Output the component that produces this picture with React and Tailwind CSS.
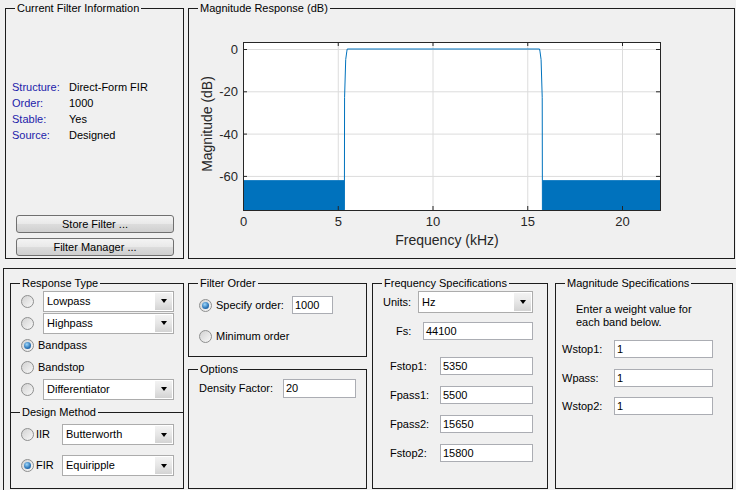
import React from 'react';

// Axes mapping for the magnitude plot (svg coords, panel interior)
const AX = { left: 54, right: 471, top: 33, bottom: 201 };
const fx = (f) => AX.left + f * 18.95;
const dy = (d) => 40 - d * 2.115;

const xTicks = [0, 5, 10, 15, 20];
const yTicks = [0, -20, -40, -60];

const response = [
  [5.35, -76.1], [5.36, -23], [5.42, -5], [5.48, -1], [5.5, 0],
  [15.65, 0], [15.67, -1], [15.73, -5], [15.79, -23], [15.8, -76.1],
];

function Panel({ title, className = '', children }) {
  return (
    <div className={`relative border border-[#1c1c1c] ${className}`}>
      <span className="absolute -top-[7px] left-[9px] bg-[#f0f0f0] px-[2px] leading-[13px] whitespace-nowrap">
        {title}
      </span>
      {children}
    </div>
  );
}

function Radio({ checked = false }) {
  return (
    <span className="flex h-[13px] w-[13px] shrink-0 items-center justify-center rounded-full border border-[#8e8f8f] bg-[linear-gradient(135deg,#d2d2d2,#f8f8f8)]">
      {checked && (
        <span className="h-[7px] w-[7px] rounded-full bg-[radial-gradient(circle_at_40%_35%,#9fd8fb,#2a73b6_60%,#174a80)]" />
      )}
    </span>
  );
}

function Select({ value, className = '' }) {
  return (
    <div className={`flex items-center border border-[#acacac] bg-white ${className}`}>
      <span className="flex-1 pl-[3px]">{value}</span>
      <span className="mr-[1px] flex h-[calc(100%-2px)] w-[17px] items-center justify-center bg-[linear-gradient(#f3f3f3,#e6e6e6_50%,#d3d3d3)]">
        <span className="h-0 w-0 border-x-[3.5px] border-t-[4px] border-x-transparent border-t-black" />
      </span>
    </div>
  );
}

function Field({ value, className = '' }) {
  return (
    <div className={`flex items-center border border-[#abadb3] bg-white pl-[2px] ${className}`}>
      {value}
    </div>
  );
}

function Button({ children }) {
  return (
    <div className="flex h-[18px] w-[158px] items-center justify-center rounded-[3px] border border-[#707070] bg-[linear-gradient(#f4f4f4,#e9e9e9_48%,#dcdcdc_52%,#cfcfcf)]">
      {children}
    </div>
  );
}

function MagnitudePlot() {
  const pts = response.map(([f, d]) => `${fx(f)},${dy(d)}`).join(' ');
  return (
    <svg width="545" height="249" className="block">
      <rect x={AX.left} y={AX.top} width={AX.right - AX.left} height={AX.bottom - AX.top} fill="#fff" />
      {xTicks.slice(1).map((t) => (
        <line key={t} x1={fx(t) + 0.5} x2={fx(t) + 0.5} y1={AX.top} y2={AX.bottom} stroke="#dcdcdc" />
      ))}
      {yTicks.map((t) => (
        <line key={t} x1={AX.left} x2={AX.right} y1={dy(t) + 0.5} y2={dy(t) + 0.5} stroke="#dcdcdc" />
      ))}
      <rect x={AX.left} y={dy(-62)} width={fx(5.35) - AX.left} height={AX.bottom - dy(-62)} fill="#0072bd" />
      <rect x={fx(15.8)} y={dy(-62)} width={AX.right - fx(15.8)} height={AX.bottom - dy(-62)} fill="#0072bd" />
      <polyline points={pts} fill="none" stroke="#0072bd" strokeWidth="1" />
      {xTicks.map((t) => (
        <g key={t} stroke="#262626">
          <line x1={fx(t) + 0.5} x2={fx(t) + 0.5} y1={AX.bottom} y2={AX.bottom - 4} />
          <line x1={fx(t) + 0.5} x2={fx(t) + 0.5} y1={AX.top} y2={AX.top + 4} />
        </g>
      ))}
      {yTicks.map((t) => (
        <g key={t} stroke="#262626">
          <line x1={AX.left} x2={AX.left + 4} y1={dy(t) + 0.5} y2={dy(t) + 0.5} />
          <line x1={AX.right} x2={AX.right - 4} y1={dy(t) + 0.5} y2={dy(t) + 0.5} />
        </g>
      ))}
      <rect x={AX.left + 0.5} y={AX.top + 0.5} width={AX.right - AX.left} height={AX.bottom - AX.top} fill="none" stroke="#262626" />
      {xTicks.map((t) => (
        <text key={t} x={fx(t) + 0.5} y="217" fontSize="13" fill="#262626" textAnchor="middle">
          {t}
        </text>
      ))}
      {yTicks.map((t) => (
        <text key={t} x="49" y={dy(t) + 5} fontSize="13" fill="#262626" textAnchor="end">
          {t}
        </text>
      ))}
      <text x="258" y="236" fontSize="14" fill="#262626" textAnchor="middle">
        Frequency (kHz)
      </text>
      <text x="23" y="115" fontSize="14" fill="#262626" textAnchor="middle" transform="rotate(-90 23 115)">
        Magnitude (dB)
      </text>
    </svg>
  );
}

const info = [
  ['Structure:', 'Direct-Form FIR'],
  ['Order:', '1000'],
  ['Stable:', 'Yes'],
  ['Source:', 'Designed'],
];

export default function App() {
  return (
    <div className="h-[490px] w-[736px] overflow-hidden bg-[#f0f0f0] font-['Liberation_Sans',Arial,sans-serif] text-[11px] leading-[13px] text-black">
      {/* Top: filter info + plot */}
      <div className="flex gap-[4px] pt-[8px] pl-[5px]">
        <Panel title="Current Filter Information" className="flex h-[251px] w-[179px] shrink-0 flex-col">
          <div className="mt-[70px] ml-[6px]">
            {info.map(([k, v]) => (
              <div key={k} className="flex h-[16px] items-center">
                <span className="w-[57px] text-[#2222aa]">{k}</span>
                <span>{v}</span>
              </div>
            ))}
          </div>
          <div className="mt-auto mb-[2px] ml-[10px] flex flex-col gap-[5px]">
            <Button>Store Filter ...</Button>
            <Button>Filter Manager ...</Button>
          </div>
        </Panel>
        <Panel title="Magnitude Response (dB)" className="h-[251px] w-[547px] shrink-0">
          <MagnitudePlot />
        </Panel>
      </div>

      {/* Bottom: design settings */}
      <div className="mt-[9px] ml-[3px] flex h-[240px] w-[760px] border border-[#1c1c1c] pt-[14px] pl-[6px]">
        {/* Response type / design method */}
        <div className="flex w-[174px] shrink-0 flex-col">
          <Panel title="Response Type" className="h-[129px] border-b-0 pt-[6px] pl-[10px]">
            <div className="flex h-[22px] items-center">
              <Radio />
              <Select value="Lowpass" className="ml-[9px] h-[21px] w-[131px]" />
            </div>
            <div className="flex h-[22px] items-center">
              <Radio />
              <Select value="Highpass" className="ml-[9px] h-[21px] w-[131px]" />
            </div>
            <div className="flex h-[22px] items-center">
              <Radio checked />
              <span className="ml-[4px]">Bandpass</span>
            </div>
            <div className="flex h-[22px] items-center">
              <Radio />
              <span className="ml-[4px]">Bandstop</span>
            </div>
            <div className="flex h-[22px] items-center">
              <Radio />
              <Select value="Differentiator" className="ml-[9px] h-[21px] w-[131px]" />
            </div>
          </Panel>
          <Panel title="Design Method" className="h-[77px] pt-[11px] pl-[10px]">
            <div className="flex h-[21px] items-center">
              <Radio />
              <span className="ml-[2px] w-[26px]">IIR</span>
              <Select value="Butterworth" className="h-[21px] w-[112px]" />
            </div>
            <div className="mt-[10px] flex h-[21px] items-center">
              <Radio checked />
              <span className="ml-[2px] w-[26px]">FIR</span>
              <Select value="Equiripple" className="h-[21px] w-[112px]" />
            </div>
          </Panel>
        </div>

        {/* Filter order / options */}
        <div className="ml-[4px] flex w-[179px] shrink-0 flex-col">
          <Panel title="Filter Order" className="h-[74px] pt-[12px] pl-[10px]">
            <div className="flex h-[18px] items-center">
              <Radio checked />
              <span className="ml-[4px] w-[76px]">Specify order:</span>
              <Field value="1000" className="h-[18px] w-[41px]" />
            </div>
            <div className="mt-[13px] flex h-[18px] items-center">
              <Radio />
              <span className="ml-[4px]">Minimum order</span>
            </div>
          </Panel>
          <Panel title="Options" className="mt-[12px] h-[120px] pt-[9px] pl-[10px]">
            <div className="flex h-[19px] items-center">
              <span className="w-[84px]">Density Factor:</span>
              <Field value="20" className="h-[19px] w-[73px]" />
            </div>
          </Panel>
        </div>

        {/* Frequency specifications */}
        <Panel title="Frequency Specifications" className="ml-[5px] h-[206px] w-[176px] shrink-0 pt-[7px] pl-[10px]">
          <div className="flex h-[22px] items-center">
            <span className="w-[35px]">Units:</span>
            <Select value="Hz" className="h-[22px] w-[115px]" />
          </div>
          <div className="mt-[9px] ml-[13px] flex h-[18px] items-center">
            <span className="w-[27px]">Fs:</span>
            <Field value="44100" className="h-[18px] w-[110px]" />
          </div>
          {[
            ['Fstop1:', '5350'],
            ['Fpass1:', '5500'],
            ['Fpass2:', '15650'],
            ['Fstop2:', '15800'],
          ].map(([k, v], i) => (
            <div key={k} className={`ml-[7px] flex h-[18px] items-center ${i === 0 ? 'mt-[17px]' : 'mt-[11px]'}`}>
              <span className="w-[50px]">{k}</span>
              <Field value={v} className="h-[18px] w-[93px]" />
            </div>
          ))}
        </Panel>

        {/* Magnitude specifications */}
        <Panel title="Magnitude Specifications" className="ml-[7px] h-[206px] w-[178px] shrink-0 pt-[19px] pl-[6px]">
          <div className="pl-[14px]">
            <div>Enter a weight value for</div>
            <div>each band below.</div>
          </div>
          {[
            ['Wstop1:', '1'],
            ['Wpass:', '1'],
            ['Wstop2:', '1'],
          ].map(([k, v], i) => (
            <div key={k} className={`flex h-[18px] items-center ${i === 2 ? 'mt-[10px]' : 'mt-[11px]'}`}>
              <span className="w-[52px]">{k}</span>
              <Field value={v} className="h-[18px] w-[99px]" />
            </div>
          ))}
        </Panel>
      </div>
    </div>
  );
}
